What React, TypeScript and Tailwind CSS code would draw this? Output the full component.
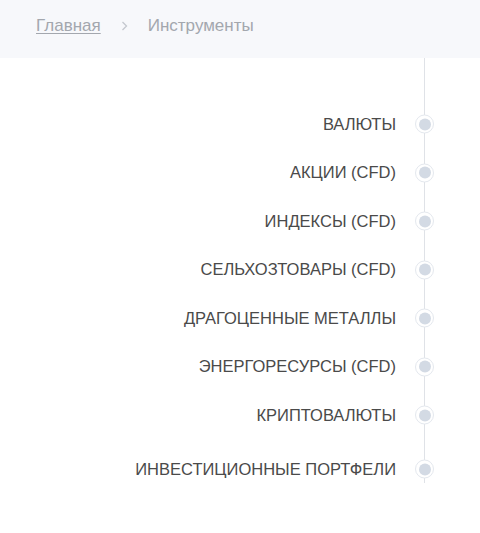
const items = [
  "ВАЛЮТЫ",
  "АКЦИИ (CFD)",
  "ИНДЕКСЫ (CFD)",
  "СЕЛЬХОЗТОВАРЫ (CFD)",
  "ДРАГОЦЕННЫЕ МЕТАЛЛЫ",
  "ЭНЕРГОРЕСУРСЫ (CFD)",
  "КРИПТОВАЛЮТЫ",
]

function Dot() {
  return (
    <span className="absolute right-[-10px] top-1/2 -translate-y-1/2 w-[19px] h-[19px] rounded-full bg-white border border-[#e4e8ee] flex items-center justify-center">
      <span className="w-[12px] h-[12px] rounded-full bg-[#d3dae4]" />
    </span>
  )
}

export default function App() {
  return (
    <div className="w-[480px] h-[533px] bg-white font-['Liberation_Sans',Arial,sans-serif]">
      {/* breadcrumbs */}
      <div className="h-[58px] bg-[#f7f8fb] flex items-center px-9 pb-[6px] text-[17px] text-[#a3a7ae]">
        <a href="#" className="underline underline-offset-2">Главная</a>
        <svg className="mx-[20px] w-[7px] h-[10px]" viewBox="0 0 7 10" fill="none">
          <path d="M1.5 1l4 4-4 4" stroke="#c4c8ce" strokeWidth="1.3" />
        </svg>
        <span>Инструменты</span>
      </div>

      {/* timeline */}
      <div className="mr-[55px] border-r border-[#dfe2e7] pt-[42px] text-[16.5px] text-[#4a4a4a]">
        {items.map((item) => (
          <div key={item} className="relative h-[48.5px] flex items-center justify-end pr-[28px]">
            {item}
            <Dot />
          </div>
        ))}
        <div className="relative h-[28px] mt-[15.75px] flex items-center justify-end pr-[28px]">
          ИНВЕСТИЦИОННЫЕ ПОРТФЕЛИ
          <Dot />
        </div>
      </div>
    </div>
  )
}
